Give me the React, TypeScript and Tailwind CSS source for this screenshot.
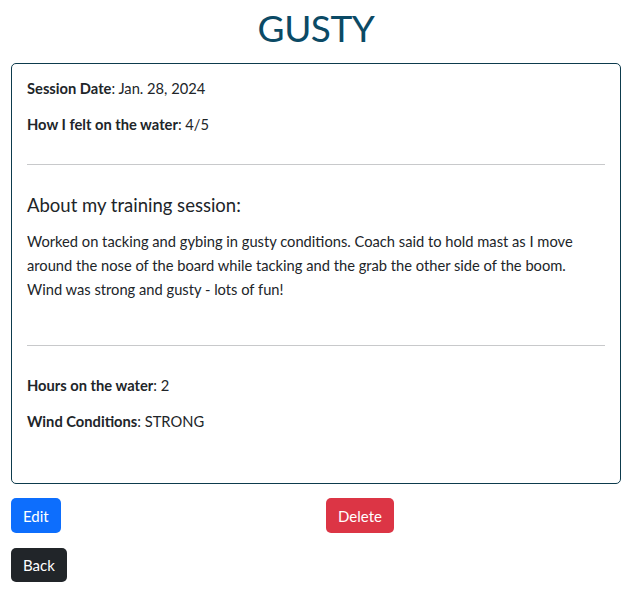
import React from 'react';

const Field = ({ label, value, className = '' }: { label: string; value: string; className?: string }) => (
  <div className={`leading-6 ${className}`}>
    <span className="font-bold">{label}</span>: {value}
  </div>
);

export default function App() {
  return (
    <div className="min-h-screen bg-white text-[#212529] text-[14.7px] font-['Lato','Noto_Sans',sans-serif] pl-[11px] pr-[14px] pb-6">
      <h1 className="text-center text-[37px] leading-[48px] tracking-[-0.5px] text-[#0b4a65] mt-1 mb-[11px] font-normal">GUSTY</h1>

      <div className="border border-[#0d3b4d] rounded-[5px] px-[15px] pt-3 pb-[50px]">
        <Field label="Session Date" value="Jan. 28, 2024" />
        <Field label="How I felt on the water" value="4/5" className="mt-3" />

        <hr className="mt-[28px] border-0 border-t border-[#c8c9cb]" />

        <h5 className="mt-[28px] text-[18.5px] leading-6 font-normal">About my training session:</h5>
        <p className="mt-3 pr-[20px] leading-6">
          Worked on tacking and gybing in gusty conditions. Coach said to hold mast as I move around the nose of the
          board while tacking and the grab the other side of the boom. Wind was strong and gusty - lots of fun!
        </p>

        <hr className="mt-[44px] border-0 border-t border-[#c8c9cb]" />

        <Field label="Hours on the water" value="2" className="mt-[27px]" />
        <Field label="Wind Conditions" value="STRONG" className="mt-3" />
      </div>

      <div className="grid grid-cols-[315px_1fr] mt-[14px]">
        <div>
          <button className="h-[35px] px-3 rounded-[5px] bg-[#0d6efd] text-white text-[15px] leading-6">Edit</button>
        </div>
        <div>
          <button className="h-[35px] px-3 rounded-[5px] bg-[#dc3545] text-white text-[15px] leading-6">Delete</button>
        </div>
      </div>

      <button className="mt-[15px] h-[34px] px-3 rounded-[5px] bg-[#212529] text-white text-[15px] leading-6">Back</button>
    </div>
  );
}
